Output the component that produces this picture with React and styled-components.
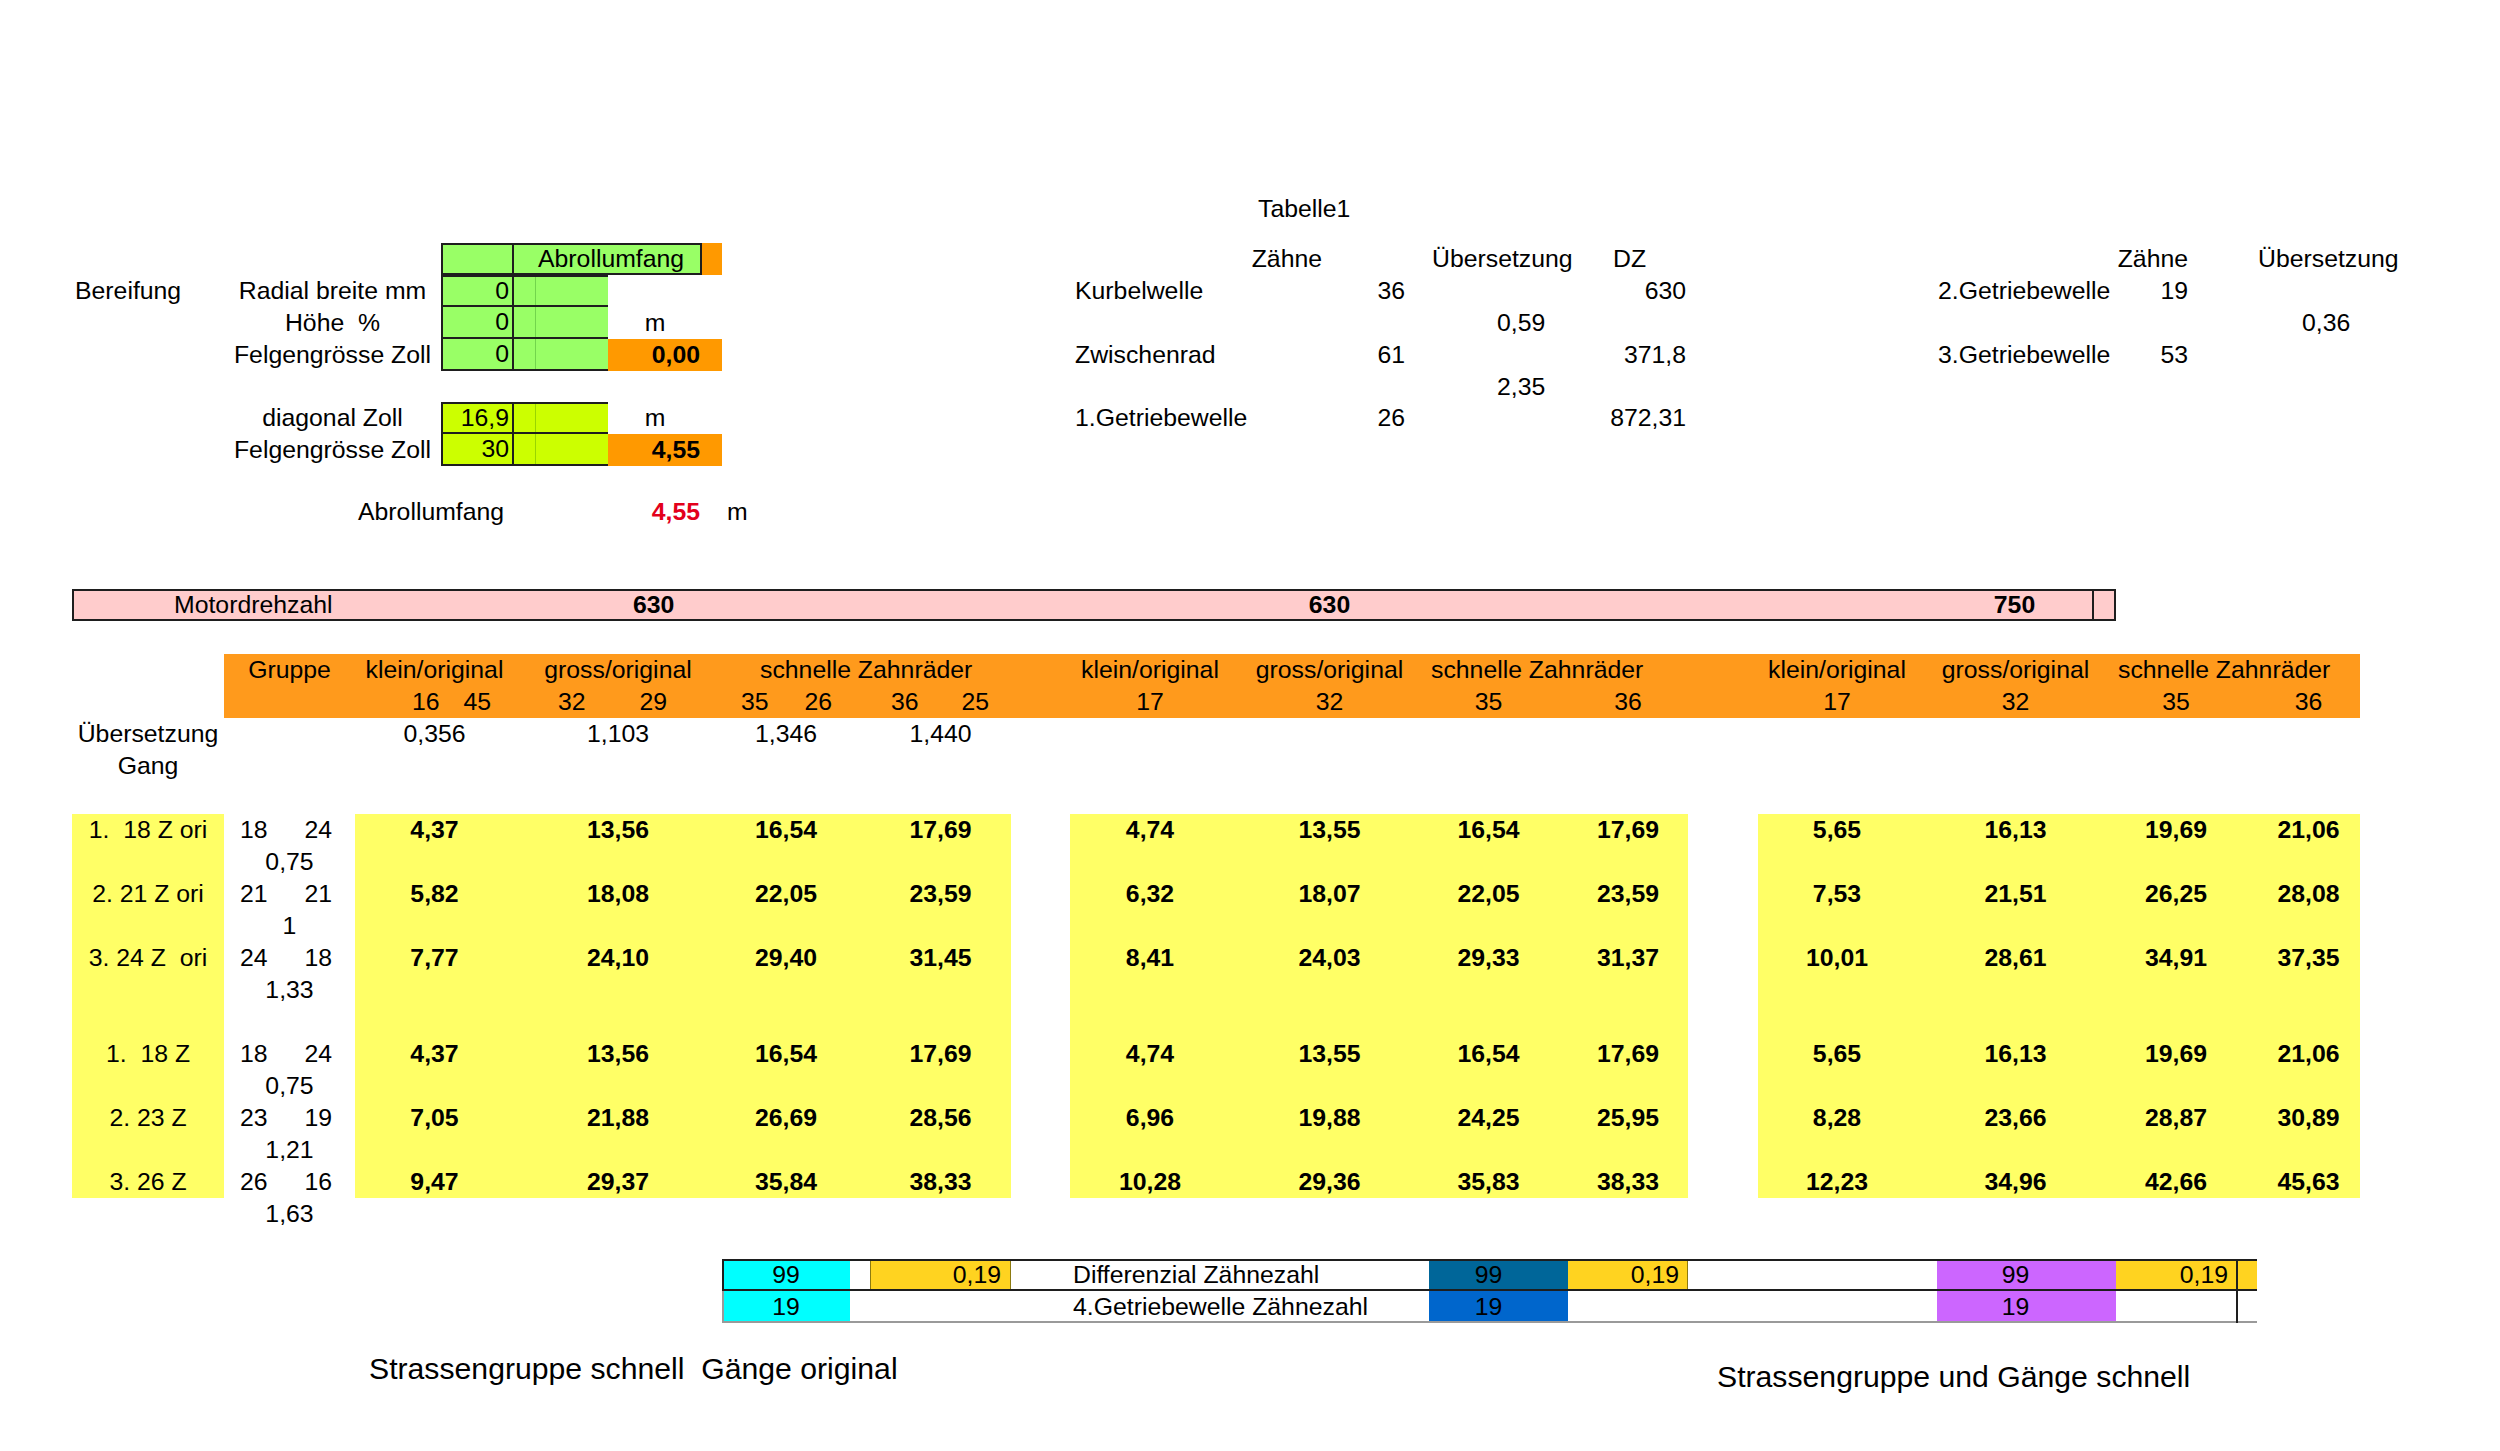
import React from "react";
import styled, { createGlobalStyle } from "styled-components";

const GlobalStyle = createGlobalStyle`
  html, body {
    margin: 0;
    padding: 0;
    background: #ffffff;
  }
  body {
    font-family: "Liberation Sans", Arial, sans-serif;
    color: #000000;
  }
`;

// column widths of the sheet (px)
const TOP_COLS = [72, 152, 217, 73, 21, 73, 94, 20, 348, 180, 80, 80, 190, 90, 240, 190, 72, 228];
const TOP_ROWS = [32, 32, 32, 32, 31, 32, 32, 30, 32];
const MAIN_COLS = [72, 152, 131, 159, 208, 128, 20, 141, 59, 160, 199, 119, 20, 120, 70, 158, 21, 157, 22, 120, 21, 103];
const px = (list) => list.map((w) => w + "px").join(" ");

const GREEN = "#99ff66";
const LIME = "#ccff00";
const ORANGE = "#ff9900";
const BAND = "#ff9a1c";
const YELLOW = "#ffff66";
const PINK = "#ffcccc";
const GOLD = "#ffd320";
const CYAN = "#00ffff";
const TEAL = "#006699";
const BLUE = "#0066cc";
const PURPLE = "#cc66ff";
const LINE = "#1e1e1e";

const Page = styled.div`
  width: 2500px;
  height: 1451px;
  overflow: hidden;
  padding-top: 193px;
  box-sizing: border-box;
`;

const Title = styled.div`
  height: 32px;
  line-height: 32px;
  font-size: 24.8px;
  padding-left: 1258px;
`;

const Sheet = styled.div`
  display: grid;
  grid-template-columns: ${(p) => p.$cols};
  grid-template-rows: ${(p) => p.$rows};
  margin-top: ${(p) => p.$mt || 0}px;
`;

const Cell = styled.div`
  grid-column: ${(p) => p.$c} / span ${(p) => p.$s || 1};
  grid-row: ${(p) => p.$r} / span ${(p) => p.$rs || 1};
  display: flex;
  align-items: center;
  justify-content: ${(p) => (p.$a === "c" ? "center" : p.$a === "r" ? "flex-end" : "flex-start")};
  padding: 0 ${(p) => p.$pr || 0}px 0 ${(p) => p.$pl || 0}px;
  box-sizing: border-box;
  min-width: 0;
  font-size: 24.8px;
  white-space: pre;
  font-weight: ${(p) => (p.$b ? 700 : 400)};
  color: ${(p) => p.$color || "#000000"};
`;

const Box = styled(Cell)`
  background: ${(p) => p.$bg || "transparent"};
  border-style: solid;
  border-color: ${(p) => p.$bc || LINE};
  border-width: ${(p) => p.$bw || "0"};
  box-shadow: ${(p) => (p.$faint ? "inset 1px 0 0 rgba(0, 90, 0, 0.25)" : "none")};
`;

const Band = styled(Cell)`
  background: ${BAND};
`;

const Pair = styled(Cell)`
  justify-content: space-between;
`;

const Rule = styled(Cell)`
  border-style: solid;
  border-color: ${(p) => p.$bc || LINE};
  border-width: ${(p) => p.$bw};
  pointer-events: none;
`;

const Captions = styled.div`
  display: flex;
  align-items: flex-start;
  margin-top: 28px;
  padding-left: 369px;
`;

const Caption = styled.div`
  font-size: 30.2px;
  line-height: 36px;
  white-space: pre;
  width: ${(p) => p.$w || "auto"};
  margin-top: ${(p) => p.$mt || 0}px;
`;

const TireRows = ({ bg, rows }) =>
  rows.map((row, i) => {
    const top = i === 0 ? "2px" : "0";
    return (
      <React.Fragment key={row.r}>
        <Cell $c={3} $r={row.r} $a="c">{row.label}</Cell>
        <Box $c={4} $r={row.r} $bg={bg} $bw={`${top} 2px 2px 2px`} $a="r" $pr={3}>{row.value}</Box>
        <Box $c={5} $r={row.r} $bg={bg} $bw={`${top} 0 2px 0`} />
        <Box $c={6} $r={row.r} $bg={bg} $bw={`${top} 0 2px 0`} $faint />
        {row.unit && <Cell $c={7} $r={row.r} $a="c">m</Cell>}
        {row.result && (
          <Box $c={7} $s={2} $r={row.r} $bg={ORANGE} $a="r" $pr={22} $b>{row.result}</Box>
        )}
      </React.Fragment>
    );
  });

const TopBlock = () => (
  <Sheet $cols={px(TOP_COLS)} $rows={px(TOP_ROWS)} $mt={18}>
    {/* tyre input block */}
    <Cell $c={2} $r={2} $pl={3}>Bereifung</Cell>
    <Box $c={4} $r={1} $bg={GREEN} $bw="2px 2px 2px 2px" />
    <Box $c={5} $s={3} $r={1} $bg={GREEN} $bw="2px 2px 2px 0" $pl={24}>Abrollumfang</Box>
    <Box $c={8} $r={1} $bg={ORANGE} />
    <TireRows
      bg={GREEN}
      rows={[
        { r: 2, label: "Radial breite mm", value: "0" },
        { r: 3, label: "Höhe  %", value: "0", unit: true },
        { r: 4, label: "Felgengrösse Zoll", value: "0", result: "0,00" },
      ]}
    />
    <TireRows
      bg={LIME}
      rows={[
        { r: 6, label: "diagonal Zoll", value: "16,9", unit: true },
        { r: 7, label: "Felgengrösse Zoll", value: "30", result: "4,55" },
      ]}
    />
    <Cell $c={3} $r={9} $pl={134}>Abrollumfang</Cell>
    <Cell $c={7} $r={9} $a="r" $pr={2} $b $color="#e3001b">4,55</Cell>
    <Cell $c={9} $r={9} $pl={5}>m</Cell>

    {/* Tabelle1 */}
    <Cell $c={11} $r={1} $a="r" $pr={8}>Zähne</Cell>
    <Cell $c={13} $r={1} $pl={22}>Übersetzung</Cell>
    <Cell $c={14} $r={1} $pl={13}>DZ</Cell>
    <Cell $c={10} $r={2} $pl={5}>Kurbelwelle</Cell>
    <Cell $c={12} $r={2} $a="r" $pr={5}>36</Cell>
    <Cell $c={14} $r={2} $a="r" $pr={4}>630</Cell>
    <Cell $c={13} $r={3} $pl={87}>0,59</Cell>
    <Cell $c={10} $r={4} $pl={5}>Zwischenrad</Cell>
    <Cell $c={12} $r={4} $a="r" $pr={5}>61</Cell>
    <Cell $c={14} $r={4} $a="r" $pr={4}>371,8</Cell>
    <Cell $c={13} $r={5} $pl={87}>2,35</Cell>
    <Cell $c={10} $r={6} $pl={5}>1.Getriebewelle</Cell>
    <Cell $c={12} $r={6} $a="r" $pr={5}>26</Cell>
    <Cell $c={14} $r={6} $a="r" $pr={4}>872,31</Cell>

    {/* second gearbox table */}
    <Cell $c={17} $r={1} $a="r" $pr={4}>Zähne</Cell>
    <Cell $c={18} $r={1} $pl={66}>Übersetzung</Cell>
    <Cell $c={16} $r={2} $pl={8}>2.Getriebewelle</Cell>
    <Cell $c={17} $r={2} $a="r" $pr={4}>19</Cell>
    <Cell $c={18} $r={3} $pl={110}>0,36</Cell>
    <Cell $c={16} $r={4} $pl={8}>3.Getriebewelle</Cell>
    <Cell $c={17} $r={4} $a="r" $pr={4}>53</Cell>
  </Sheet>
);

const MotorBar = () => (
  <Sheet $cols={px(MAIN_COLS)} $rows="32px" $mt={61}>
    <Box $c={2} $s={3} $r={1} $bg={PINK} $bw="2px 0 2px 2px" $pl={100}>Motordrehzahl</Box>
    <Box $c={5} $r={1} $bg={PINK} $bw="2px 0 2px 0" $pl={119} $b>630</Box>
    <Box $c={6} $s={5} $r={1} $bg={PINK} $bw="2px 0 2px 0" />
    <Box $c={11} $r={1} $bg={PINK} $bw="2px 0 2px 0" $a="c" $b>630</Box>
    <Box $c={12} $s={6} $r={1} $bg={PINK} $bw="2px 0 2px 0" />
    <Box $c={18} $r={1} $bg={PINK} $bw="2px 2px 2px 0" $a="c" $b>750</Box>
    <Box $c={19} $r={1} $bg={PINK} $bw="2px 2px 2px 0" />
  </Sheet>
);

const VAL_COLS = [4, 5, 6, 8, 10, 11, 12, 14, 16, 18, 20, 22];

const FIRST = ["4,37", "13,56", "16,54", "17,69", "4,74", "13,55", "16,54", "17,69", "5,65", "16,13", "19,69", "21,06"];

const GEARS = [
  { r: 6, label: "1.  18 Z ori", pair: ["18", "24"], ratio: "0,75", vals: FIRST },
  {
    r: 8,
    label: "2. 21 Z ori",
    pair: ["21", "21"],
    ratio: "1",
    vals: ["5,82", "18,08", "22,05", "23,59", "6,32", "18,07", "22,05", "23,59", "7,53", "21,51", "26,25", "28,08"],
  },
  {
    r: 10,
    label: "3. 24 Z  ori",
    pair: ["24", "18"],
    ratio: "1,33",
    vals: ["7,77", "24,10", "29,40", "31,45", "8,41", "24,03", "29,33", "31,37", "10,01", "28,61", "34,91", "37,35"],
  },
  { r: 13, label: "1.  18 Z", pair: ["18", "24"], ratio: "0,75", vals: FIRST },
  {
    r: 15,
    label: "2. 23 Z",
    pair: ["23", "19"],
    ratio: "1,21",
    vals: ["7,05", "21,88", "26,69", "28,56", "6,96", "19,88", "24,25", "25,95", "8,28", "23,66", "28,87", "30,89"],
  },
  {
    r: 17,
    label: "3. 26 Z",
    pair: ["26", "16"],
    ratio: "1,63",
    vals: ["9,47", "29,37", "35,84", "38,33", "10,28", "29,36", "35,83", "38,33", "12,23", "34,96", "42,66", "45,63"],
  },
];

const GROUP_HEAD = [
  { c: 10, t: "klein/original" },
  { c: 11, t: "gross/original" },
  { c: 16, t: "klein/original" },
  { c: 18, t: "gross/original" },
];

const GROUP_TEETH = [
  { c: 10, t: "17" },
  { c: 11, t: "32" },
  { c: 12, t: "35" },
  { c: 14, t: "36" },
  { c: 16, t: "17" },
  { c: 18, t: "32" },
  { c: 20, t: "35" },
  { c: 22, t: "36" },
];

const GearTable = () => (
  <Sheet $cols={px(MAIN_COLS)} $rows="repeat(18, 32px)" $mt={33}>
    <Band $c={3} $s={20} $r={1} $rs={2} />
    <Box $c={2} $r={6} $rs={12} $bg={YELLOW} />
    <Box $c={4} $s={5} $r={6} $rs={12} $bg={YELLOW} />
    <Box $c={10} $s={5} $r={6} $rs={12} $bg={YELLOW} />
    <Box $c={16} $s={7} $r={6} $rs={12} $bg={YELLOW} />

    <Cell $c={3} $r={1} $a="c">Gruppe</Cell>
    <Cell $c={4} $r={1} $a="c">klein/original</Cell>
    <Cell $c={5} $r={1} $a="c">gross/original</Cell>
    <Cell $c={6} $s={3} $r={1} $pl={38}>schnelle Zahnräder</Cell>
    <Cell $c={12} $s={3} $r={1} $pl={2}>schnelle Zahnräder</Cell>
    <Cell $c={20} $s={3} $r={1} $pl={2}>schnelle Zahnräder</Cell>
    {GROUP_HEAD.map((h) => (
      <Cell key={h.c} $c={h.c} $r={1} $a="c">{h.t}</Cell>
    ))}

    <Pair $c={4} $r={2} $pl={57} $pr={23}><span>16</span><span>45</span></Pair>
    <Pair $c={5} $r={2} $pl={44} $pr={55}><span>32</span><span>29</span></Pair>
    <Pair $c={6} $r={2} $pl={19} $pr={18}><span>35</span><span>26</span></Pair>
    <Pair $c={8} $r={2} $pl={21} $pr={22}><span>36</span><span>25</span></Pair>
    {GROUP_TEETH.map((h) => (
      <Cell key={h.c} $c={h.c} $r={2} $a="c">{h.t}</Cell>
    ))}

    <Cell $c={2} $r={3} $a="c">Übersetzung</Cell>
    <Cell $c={2} $r={4} $a="c">Gang</Cell>
    {["0,356", "1,103", "1,346", "1,440"].map((v, i) => (
      <Cell key={v} $c={VAL_COLS[i]} $r={3} $a="c">{v}</Cell>
    ))}

    {GEARS.map((g) => (
      <React.Fragment key={g.r}>
        <Cell $c={2} $r={g.r} $a="c">{g.label}</Cell>
        <Pair $c={3} $r={g.r} $pl={16} $pr={23}>
          <span>{g.pair[0]}</span>
          <span>{g.pair[1]}</span>
        </Pair>
        <Cell $c={3} $r={g.r + 1} $a="c">{g.ratio}</Cell>
        {g.vals.map((v, i) => (
          <Cell key={i} $c={VAL_COLS[i]} $r={g.r} $a="c" $b>{v}</Cell>
        ))}
      </React.Fragment>
    ))}
  </Sheet>
);

const GOLD_EDGE = "#8c7a10";

const DiffTable = () => (
  <Sheet $cols={px(MAIN_COLS)} $rows="repeat(2, 32px)" $mt={29}>
    <Box $c={6} $r={1} $bg={CYAN} $a="c">99</Box>
    <Box $c={8} $r={1} $bg={GOLD} $bc={GOLD_EDGE} $bw="0 1px 0 1px" $a="r" $pr={9}>0,19</Box>
    <Cell $c={10} $s={2} $r={1} $pl={3}>Differenzial Zähnezahl</Cell>
    <Box $c={12} $s={2} $r={1} $bg={TEAL} $a="c" $pr={20}>99</Box>
    <Box $c={14} $r={1} $bg={GOLD} $bc={GOLD_EDGE} $bw="0 1px 0 0" $a="r" $pr={8}>0,19</Box>
    <Box $c={18} $s={2} $r={1} $bg={PURPLE} $a="c" $pr={22}>99</Box>
    <Box $c={20} $r={1} $bg={GOLD} $a="r" $pr={8}>0,19</Box>
    <Box $c={21} $r={1} $bg={GOLD} />

    <Box $c={6} $r={2} $bg={CYAN} $a="c">19</Box>
    <Cell $c={10} $s={2} $r={2} $pl={3}>4.Getriebewelle Zähnezahl</Cell>
    <Box $c={12} $s={2} $r={2} $bg={BLUE} $a="c" $pr={20}>19</Box>
    <Box $c={18} $s={2} $r={2} $bg={PURPLE} $a="c" $pr={22}>19</Box>

    <Rule $c={6} $s={16} $r={1} $bw="2px 0 2px 2px" />
    <Rule $c={6} $s={16} $r={2} $bw="0 0 2px 2px" $bc="#9a9a9a" />
    <Rule $c={21} $r={1} $rs={2} $bw="0 0 0 2px" />
  </Sheet>
);

const App = () => (
  <Page>
    <GlobalStyle />
    <Title>Tabelle1</Title>
    <TopBlock />
    <MotorBar />
    <GearTable />
    <DiffTable />
    <Captions>
      <Caption $w="1348px">Strassengruppe schnell  Gänge original</Caption>
      <Caption $mt={8}>Strassengruppe und Gänge schnell</Caption>
    </Captions>
  </Page>
);

export default App;
